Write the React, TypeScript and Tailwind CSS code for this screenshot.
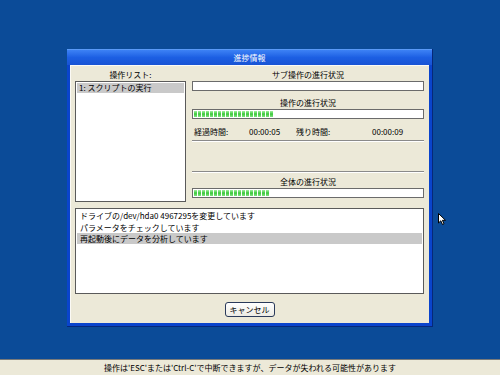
import React from "react";

function Bar({ segs }: { segs: number }) {
  return (
    <div className="h-[10px] w-full border border-[#6b6b6b] bg-white flex items-center pl-[1px] gap-[1px]">
      {Array.from({ length: segs }).map((_, i) => (
        <div
          key={i}
          className="h-[6px] w-[3px] bg-gradient-to-b from-[#9ef09e] via-[#37c837] to-[#7ee27e]"
        />
      ))}
    </div>
  );
}

export default function App() {
  return (
    <div className="relative w-[500px] h-[375px] bg-[#0b4b98] flex flex-col font-['Noto_Sans_CJK_JP',sans-serif] text-[8px] leading-[12px] text-black overflow-hidden">
      {/* Dialog */}
      <div className="ml-[67px] mt-[49px] w-[366px] h-[278px] flex flex-col bg-[#0a44cc] border-r border-b border-[#06287a]">
        <div className="h-[16px] shrink-0 flex items-center justify-center bg-gradient-to-b from-[#3d82f5] via-[#1c5fe3] to-[#1854d4] text-white border-t border-[#5a9af8]">
          進捗情報
        </div>
        <div className="mx-[3px] mb-[3px] flex-1 bg-[#ece9d8] border-l border-t border-[#fbfaf5] flex flex-col pl-[4px] pr-[5px] pt-[2px]">
          <div className="flex gap-[6px]">
            {/* left column */}
            <div className="w-[111px] flex flex-col">
              <div className="h-[13px] flex items-center justify-center">操作リスト:</div>
              <div className="h-[121px] bg-white border border-[#5a5a5a] p-[1px]">
                <div className="h-[10px] bg-[#c9c9c9] flex items-center pl-[2px]">1: スクリプトの実行</div>
              </div>
            </div>
            {/* right column */}
            <div className="flex-1 flex flex-col">
              <div className="h-[13px] flex items-center justify-center">サブ操作の進行状況</div>
              <div className="h-[10px] w-full border border-[#6b6b6b] bg-white" />
              <div className="mt-[5px] h-[13px] flex items-center justify-center">操作の進行状況</div>
              <Bar segs={20} />
              <div className="mt-[7px] h-[12px] flex items-center">
                <span className="w-[57px] pl-[2px]">経過時間:</span>
                <span className="w-[47px]">00:00:05</span>
                <span className="w-[76px]">残り時間:</span>
                <span>00:00:09</span>
              </div>
              <div className="mt-[2px] h-[2px] border-t border-[#8a8a8a] border-b border-b-white" />
              <div className="mt-[29px] h-[2px] border-t border-[#8a8a8a] border-b border-b-white" />
              <div className="mt-[3px] h-[12px] flex items-center justify-center">全体の進行状況</div>
              <Bar segs={19} />
            </div>
          </div>
          {/* log */}
          <div className="mt-[6px] h-[86px] bg-white border border-[#5a5a5a] px-[1px] pt-[1px] flex flex-col">
            <div className="h-[12px] flex items-center pl-[3px]">ドライブの/dev/hda0 4967295を変更しています</div>
            <div className="h-[11px] flex items-center pl-[3px]">パラメータをチェックしています</div>
            <div className="h-[11px] flex items-center pl-[3px] bg-[#c9c9c9]">再起動後にデータを分析しています</div>
          </div>
          <div className="mt-[8px] flex justify-center">
            <div className="w-[50px] h-[15px] rounded-[3px] border border-[#2a3a5a] bg-gradient-to-b from-white to-[#ecebe4] flex items-center justify-center">
              キャンセル
            </div>
          </div>
        </div>
      </div>
      {/* status bar */}
      <div className="mt-auto h-[16px] bg-[#ece9d8] border-t border-[#7a7a7a] flex items-center justify-center">
        操作は'ESC'または'Ctrl-C'で中断できますが、データが失われる可能性があります
      </div>
      {/* cursor */}
      <svg className="absolute left-[438px] top-[213px]" width="9" height="13" viewBox="0 0 9 13">
        <path d="M0.5 0.5 L0.5 10 L2.8 7.8 L4.5 11.5 L6 10.8 L4.4 7.3 L7.5 7.3 Z" fill="white" stroke="black" strokeWidth="1" />
      </svg>
    </div>
  );
}
